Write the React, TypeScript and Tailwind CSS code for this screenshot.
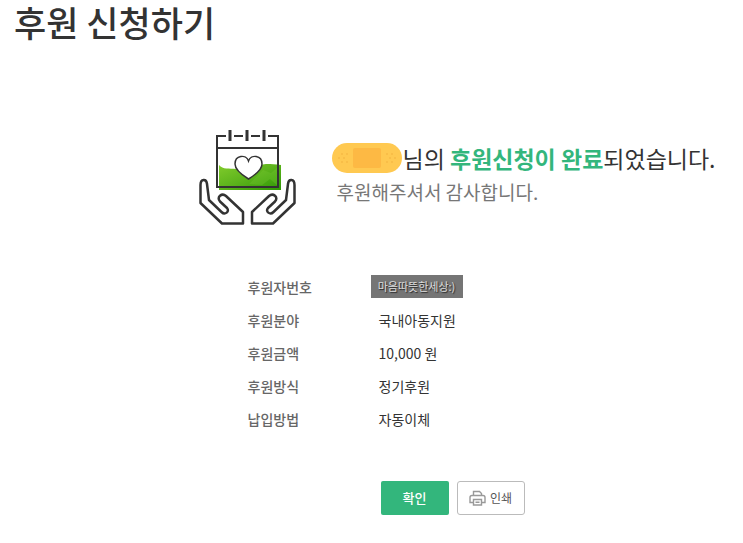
const rows = [
  { label: "후원자번호", value: "마음따뜻한세상:)", masked: true },
  { label: "후원분야", value: "국내아동지원" },
  { label: "후원금액", value: "10,000 원" },
  { label: "후원방식", value: "정기후원" },
  { label: "납입방법", value: "자동이체" },
];

const dots = [
  [10, 11],
  [15, 11],
  [7, 15],
  [12, 15],
  [10, 19],
  [15, 19],
  [60, 11],
  [55, 11],
  [63, 15],
  [58, 15],
  [60, 19],
  [55, 19],
];

const handPath =
  "M23 93.5 1.5 73V55C1.5 48.5 7.5 48.5 8 54L10 70 22.5 82C26 85.5 31 81.5 28 78L21 71.5C17 67 23 62.5 27 66L44 82V93.5z";

function DonationIcon() {
  return (
    <svg width="97" height="96" viewBox="0 0 97 96" fill="none" aria-hidden="true">
      <defs>
        <linearGradient id="leaf" x1="0" y1="0" x2="1" y2="1">
          <stop offset="0" stopColor="#82cc2c" />
          <stop offset="0.5" stopColor="#5cb31c" />
          <stop offset="1" stopColor="#2f9805" />
        </linearGradient>
      </defs>
      <path d="M20 35c4 5 10 3 17 4 12 0 19-4 30-5 6 0 9 0 15 1v25H20z" fill="url(#leaf)" />
      <path d="M50 54l14-14 8 3 8-7v21l-9-8-8 6z" fill="#7cca36" opacity="0.3" />
      <g stroke="#333" strokeWidth="2">
        <path d="M18 58V6h9M35 6h9M52 6h9M69 6h10v51H18" />
        <path d="M18 18h61" />
        <path d="M31 0v11M48 0v11M65 0v11" strokeWidth="3" />
      </g>
      <path
        d="M49.5 49C43 45 36 40 36 34c0-9 11-10 13.5-3 2.5-7 13.5-6 13.5 3 0 6-7 11-13.5 15z"
        fill="#fff"
        stroke="#333"
        strokeWidth="1.5"
      />
      <g stroke="#333" strokeWidth="2.5" strokeLinejoin="round">
        <path d={handPath} />
        <path d={handPath} transform="translate(97 0) scale(-1 1)" />
      </g>
    </svg>
  );
}

function Bandage() {
  return (
    <svg className="shrink-0" width="70" height="30" viewBox="0 0 70 30" aria-hidden="true">
      <rect width="70" height="30" rx="15" fill="#ffc951" />
      <rect x="21" y="5" width="28" height="20" rx="2" fill="#fdb944" />
      {dots.map(([x, y]) => (
        <circle key={`${x}-${y}`} cx={x} cy={y} r="0.8" fill="#f2b03f" />
      ))}
    </svg>
  );
}

function PrinterIcon() {
  return (
    <svg width="17" height="16" viewBox="0 0 17 16" fill="none" stroke="#999" strokeWidth="1.4" aria-hidden="true">
      <path d="M4.5 5.5v-4h6l2 2v2" />
      <path d="M4.500 12.500H1v-5q0-2 2-2h11q2 0 2 2v5h-3.500" />
      <path d="M4.500 9.500h8v5.500h-8zM6.500 12.300h4" />
    </svg>
  );
}

export default function App() {
  return (
    <div className="bg-white font-['Noto_Sans_CJK_KR',sans-serif] text-[#333]">
      <h1 className="pl-3.5 text-[35px] leading-11 font-medium">후원 신청하기</h1>

      <main className="flex flex-col items-center pt-[86px] pb-7 pl-[168px]">
        <section className="flex items-start gap-9 pl-1">
          <DonationIcon />
          <div className="pt-3">
            <p className="flex items-center text-[23px] leading-8 whitespace-nowrap">
              <Bandage />
              <span>
                님의 <strong className="font-bold text-[#33b67c]">후원신청이 완료</strong>되었습니다.
              </span>
            </p>
            <p className="pl-1 text-[19px] leading-9 text-[#777]">후원해주셔서 감사합니다.</p>
          </div>
        </section>

        <table className="mt-11 w-[416px] text-left text-sm">
          <tbody>
            {rows.map((row) => (
              <tr key={row.label} className="h-[33px]">
                <th scope="row" className="w-[123px] p-0 font-medium text-[#666]">
                  {row.label}
                </th>
                <td className="p-0">
                  {row.masked ? (
                    <span className="block w-[92px] bg-[#757575] text-center text-[11px] leading-[23px] text-[#ddd] text-shadow-[1px_1px_1px_#222]">
                      {row.value}
                    </span>
                  ) : (
                    <span className="pl-2">{row.value}</span>
                  )}
                </td>
              </tr>
            ))}
          </tbody>
        </table>

        <div className="mt-[46px] flex gap-2 pr-1.5">
          <button type="button" className="h-[34px] w-[68px] rounded-xs bg-[#33b67c] text-[13px] font-medium text-white">
            확인
          </button>
          <button
            type="button"
            className="flex h-[34px] w-[68px] items-center justify-center gap-1 rounded-[3px] border border-[#bbb] bg-white text-xs text-[#555]"
          >
            <PrinterIcon />
            인쇄
          </button>
        </div>
      </main>
    </div>
  );
}
